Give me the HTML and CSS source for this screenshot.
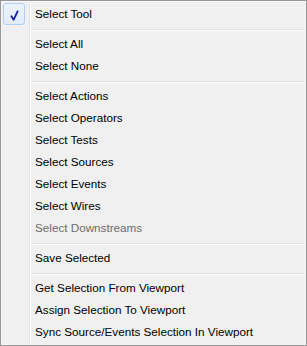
FILE: index.html
```html
<!DOCTYPE html>
<html>
  <head>
    <title>Select Menu</title>
    <link rel="stylesheet" href="styles.css">
  </head>
  <body>
    <div class="menu">
      <ul class="items">
        <li class="item checked">
          <span class="icon">
            <svg width="22" height="22" viewBox="0 0 22 22">
              <path d="M8.4 13.2 L10.6 16.8 L14.6 8.4" fill="none" stroke="#1a1d9c" stroke-width="1.8" stroke-linecap="round" stroke-linejoin="round"/>
            </svg>
          </span>
          <span class="label">Select Tool</span>
        </li>
        <li class="sep"></li>
        <li class="item"><span class="icon"></span><span class="label">Select All</span></li>
        <li class="item"><span class="icon"></span><span class="label">Select None</span></li>
        <li class="sep"></li>
        <li class="item"><span class="icon"></span><span class="label">Select Actions</span></li>
        <li class="item"><span class="icon"></span><span class="label">Select Operators</span></li>
        <li class="item"><span class="icon"></span><span class="label">Select Tests</span></li>
        <li class="item"><span class="icon"></span><span class="label">Select Sources</span></li>
        <li class="item"><span class="icon"></span><span class="label">Select Events</span></li>
        <li class="item"><span class="icon"></span><span class="label">Select Wires</span></li>
        <li class="item disabled"><span class="icon"></span><span class="label">Select Downstreams</span></li>
        <li class="sep"></li>
        <li class="item"><span class="icon"></span><span class="label">Save Selected</span></li>
        <li class="sep"></li>
        <li class="item"><span class="icon"></span><span class="label">Get Selection From Viewport</span></li>
        <li class="item"><span class="icon"></span><span class="label">Assign Selection To Viewport</span></li>
        <li class="item"><span class="icon"></span><span class="label">Sync Source/Events Selection In Viewport</span></li>
      </ul>
    </div>
  </body>
</html>
```

FILE: styles.css
```css
body {
  margin: 0;
  font-family: "Liberation Sans", Arial, sans-serif;
  font-size: 11.7px;
  color: #000;
  background: #fff;
}
.menu {
  width: 307px;
  height: 346px;
  box-sizing: border-box;
  border: 1px solid #979797;
  background: #f0f0f0;
  box-shadow: inset 1px 1px 0 #f5f5f5, inset -1px -1px 0 #f5f5f5;
  padding: 2px;
}
.items {
  list-style: none;
  margin: 0;
  padding: 0;
  height: 340px;
  background: linear-gradient(
    to right,
    transparent 26px,
    #e2e3e3 26px,
    #e2e3e3 27px,
    #ffffff 27px,
    #ffffff 28px,
    transparent 28px
  );
}
.item {
  display: flex;
  align-items: center;
  height: 22px;
}
.icon {
  width: 22px;
  height: 22px;
  box-sizing: border-box;
  flex: none;
}
.checked .icon {
  border: 1px solid #b4cfee;
  border-radius: 3px;
  background: linear-gradient(#edf3fc, #e2ecfa);
}
.checked .icon svg {
  display: block;
  margin: -1px;
}
.label {
  margin-left: 10px;
  line-height: 22px;
  white-space: nowrap;
}
.disabled {
  color: #6d6d6d;
}
.sep {
  height: 8px;
  box-sizing: border-box;
  padding-top: 4px;
  margin-left: 28px;
}
.sep::before {
  content: "";
  display: block;
  height: 1px;
  background: #e0e0e0;
  border-bottom: 1px solid #ffffff;
}
```
